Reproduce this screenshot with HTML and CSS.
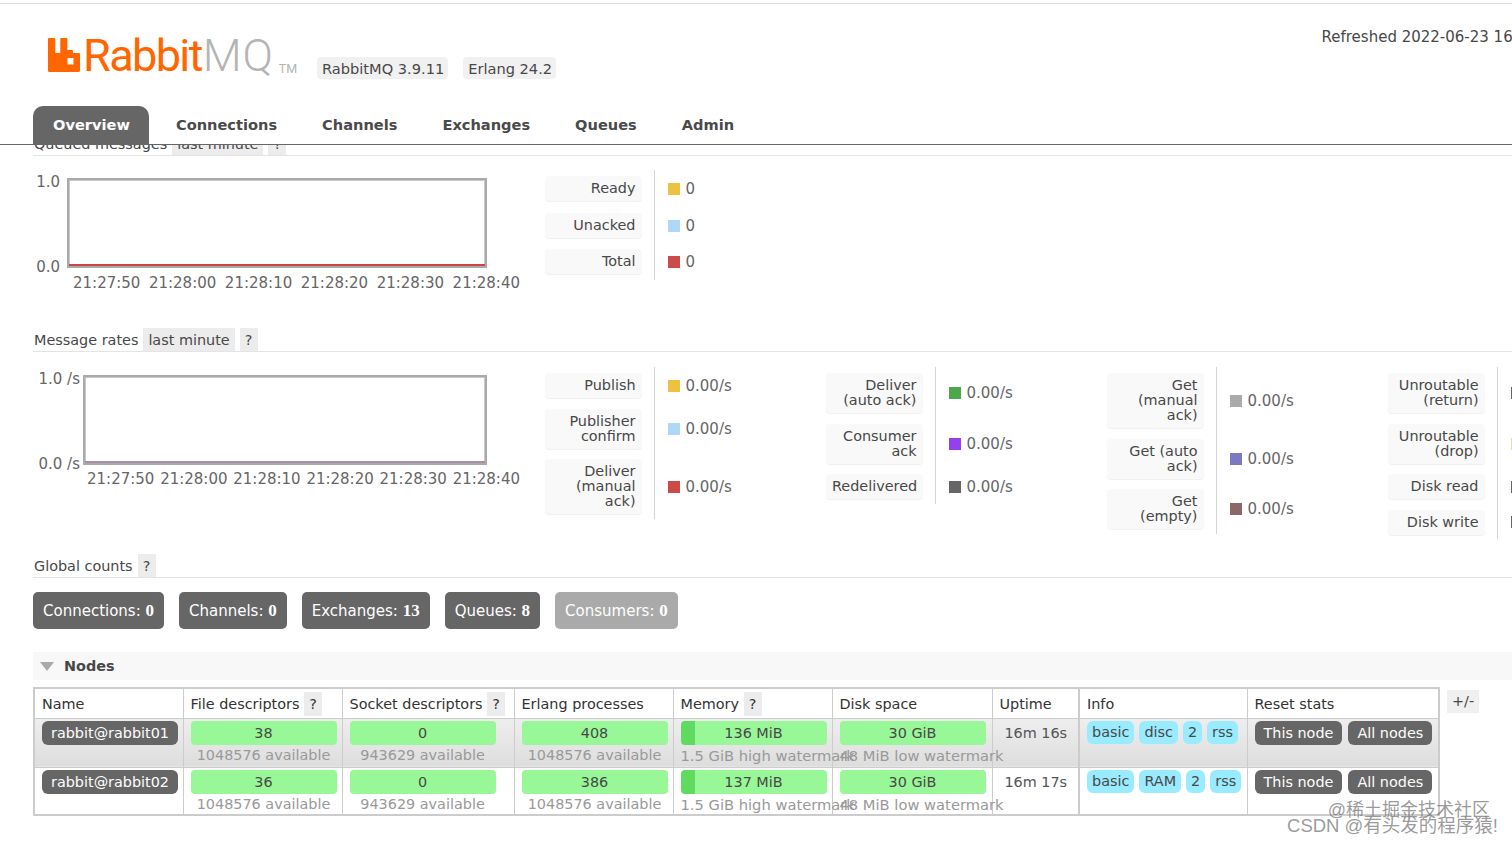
FILE: index.html

```html
<!DOCTYPE html>
<html lang="en">

<head>
    <meta charset="UTF-8">
    <meta name="viewport" content="width=device-width, initial-scale=1.0">
    <title>RabbitMQ Management</title>
    <link rel="stylesheet" href="styles.css">
</head>

<body>

    <div class="header">
        <div class="logo">
            <svg class="logo-icon" viewBox="0 0 32 34" width="32" height="34">
                <path fill="#ff6600" fill-rule="evenodd" d="M0 1.2C0 .5.5 0 1.2 0h4.9c.7 0 1.2.5 1.2 1.2V15h5V1.2c0-.7.5-1.2 1.2-1.2h4.7c.7 0 1.2.5 1.2 1.2V12h4.4c.7 0 1.2.5 1.2 1.2V15h5.800c.7 0 1.2.5 1.2 1.2v16.600c0 .7-.5 1.2-1.2 1.2H1.200C.5 34 0 33.500 0 32.800zM19.500 20v6.500h6V20z"/>
            </svg>
            <span class="logo-rabbit">Rabbit</span><span class="logo-mq">MQ</span><span class="logo-tm">TM</span>
        </div>
        <span class="chip version">RabbitMQ 3.9.11</span>
        <span class="chip version">Erlang 24.2</span>
        <span class="refreshed">Refreshed 2022-06-23 16:28:43</span>
    </div>

    <div class="nav">
        <a class="tab active">Overview</a>
        <a class="tab">Connections</a>
        <a class="tab">Channels</a>
        <a class="tab">Exchanges</a>
        <a class="tab">Queues</a>
        <a class="tab">Admin</a>
    </div>

    <div class="content">

        <div class="heading first">
            <span>Queued messages</span>
            <span class="chip">last minute</span>
            <span class="chip help">?</span>
        </div>

        <div class="stats queued">
            <div class="chart">
                <div class="plot-row">
                    <div class="yaxis short">
                        <span>1.0</span>
                        <span>0.0</span>
                    </div>
                    <div class="plot"><div class="zero red"></div></div>
                </div>
                <div class="ticks short">
                    <span>21:27:50</span><span>21:28:00</span><span>21:28:10</span><span>21:28:20</span><span>21:28:30</span><span>21:28:40</span>
                </div>
            </div>
            <table class="legend">
                <tr><th><div>Ready</div></th><td><i class="swatch yellow"></i>0</td></tr>
                <tr><th><div>Unacked</div></th><td><i class="swatch blue"></i>0</td></tr>
                <tr><th><div>Total</div></th><td><i class="swatch crimson"></i>0</td></tr>
            </table>
        </div>

        <div class="heading">
            <span>Message rates</span>
            <span class="chip">last minute</span>
            <span class="chip help">?</span>
        </div>

        <div class="stats rates">
            <div class="chart">
                <div class="plot-row">
                    <div class="yaxis long">
                        <span>1.0 /s</span>
                        <span>0.0 /s</span>
                    </div>
                    <div class="plot"><div class="zero mauve"></div></div>
                </div>
                <div class="ticks long">
                    <span>21:27:50</span><span>21:28:00</span><span>21:28:10</span><span>21:28:20</span><span>21:28:30</span><span>21:28:40</span>
                </div>
            </div>
            <table class="legend">
                <tr><th><div>Publish</div></th><td><i class="swatch yellow"></i>0.00/s</td></tr>
                <tr><th><div>Publisher<br>confirm</div></th><td><i class="swatch blue"></i>0.00/s</td></tr>
                <tr><th><div>Deliver<br>(manual<br>ack)</div></th><td><i class="swatch crimson"></i>0.00/s</td></tr>
            </table>
            <table class="legend">
                <tr><th><div>Deliver<br>(auto ack)</div></th><td><i class="swatch green"></i>0.00/s</td></tr>
                <tr><th><div>Consumer<br>ack</div></th><td><i class="swatch purple"></i>0.00/s</td></tr>
                <tr><th><div>Redelivered</div></th><td><i class="swatch dark"></i>0.00/s</td></tr>
            </table>
            <table class="legend">
                <tr><th><div>Get<br>(manual<br>ack)</div></th><td><i class="swatch grey"></i>0.00/s</td></tr>
                <tr><th><div>Get (auto<br>ack)</div></th><td><i class="swatch indigo"></i>0.00/s</td></tr>
                <tr><th><div>Get<br>(empty)</div></th><td><i class="swatch plum"></i>0.00/s</td></tr>
            </table>
            <table class="legend">
                <tr><th><div>Unroutable<br>(return)</div></th><td><i class="swatch dark"></i>0.00/s</td></tr>
                <tr><th><div>Unroutable<br>(drop)</div></th><td><i class="swatch olive"></i>0.00/s</td></tr>
                <tr><th><div>Disk read</div></th><td><i class="swatch dark"></i>0.00/s</td></tr>
                <tr><th><div>Disk write</div></th><td><i class="swatch dark"></i>0.00/s</td></tr>
            </table>
        </div>

        <div class="heading global">
            <span>Global counts</span>
            <span class="chip help">?</span>
        </div>

        <div class="counts">
            <div class="count">Connections: <b>0</b></div>
            <div class="count">Channels: <b>0</b></div>
            <div class="count">Exchanges: <b>13</b></div>
            <div class="count">Queues: <b>8</b></div>
            <div class="count faded">Consumers: <b>0</b></div>
        </div>

        <div class="section-bar">
            <svg class="arrow" viewBox="0 0 14 9" width="14" height="9"><path fill="#aaaaaa" d="M0 0h14L7 9z"/></svg>
            <span>Nodes</span>
        </div>

        <div class="nodes">
            <table class="list">
                <colgroup>
                    <col class="c-name"><col class="c-file"><col class="c-sock"><col class="c-proc"><col class="c-mem"><col class="c-disk"><col class="c-up"><col class="c-info"><col class="c-reset">
                </colgroup>
                <tr>
                    <th>Name</th>
                    <th>File descriptors <span class="chip help">?</span></th>
                    <th>Socket descriptors <span class="chip help">?</span></th>
                    <th>Erlang processes</th>
                    <th>Memory <span class="chip help">?</span></th>
                    <th>Disk space</th>
                    <th>Uptime</th>
                    <th class="split">Info</th>
                    <th>Reset stats</th>
                </tr>
                <tr class="alt">
                    <td class="center"><span class="pill name">rabbit@rabbit01</span></td>
                    <td><div class="bar">38</div><div class="sub">1048576 available</div></td>
                    <td><div class="bar">0</div><div class="sub">943629 available</div></td>
                    <td><div class="bar">408</div><div class="sub">1048576 available</div></td>
                    <td><div class="bar mem">136 MiB</div><div class="sub left">1.5 GiB high watermark</div></td>
                    <td><div class="bar">30 GiB</div><div class="sub left">48 MiB low watermark</div></td>
                    <td class="center uptime">16m 16s</td>
                    <td class="split"><div class="tags"><span class="tag">basic</span><span class="tag">disc</span><span class="tag">2</span><span class="tag">rss</span></div></td>
                    <td><div class="resets"><span class="pill">This node</span><span class="pill">All nodes</span></div></td>
                </tr>
                <tr>
                    <td class="center"><span class="pill name">rabbit@rabbit02</span></td>
                    <td><div class="bar">36</div><div class="sub">1048576 available</div></td>
                    <td><div class="bar">0</div><div class="sub">943629 available</div></td>
                    <td><div class="bar">386</div><div class="sub">1048576 available</div></td>
                    <td><div class="bar mem">137 MiB</div><div class="sub left">1.5 GiB high watermark</div></td>
                    <td><div class="bar">30 GiB</div><div class="sub left">48 MiB low watermark</div></td>
                    <td class="center uptime">16m 17s</td>
                    <td class="split"><div class="tags"><span class="tag">basic</span><span class="tag">RAM</span><span class="tag">2</span><span class="tag">rss</span></div></td>
                    <td><div class="resets"><span class="pill">This node</span><span class="pill">All nodes</span></div></td>
                </tr>
            </table>
            <span class="chip toggle">+/-</span>
        </div>

    </div>

    <div class="watermark">
        <div>@稀土掘金技术社区</div>
        <div class="watermark-csdn">CSDN @有头发的程序猿!</div>
    </div>

</body>

</html>
```

FILE: styles.css

```css
html, body {
    height: 100%;
}

body {
    margin: 0;
    width: 1512px;
    overflow: hidden;
    background: #ffffff;
    color: #484848;
    font-family: "DejaVu Sans", Verdana, sans-serif;
    font-size: 14.4px;
    line-height: 15px;
}

.header {
    display: flex;
    align-items: flex-start;
    height: 102px;
    margin-top: 3px;
    border-top: 1px solid #dddddd;
    white-space: nowrap;
}

.logo {
    display: flex;
    align-items: flex-start;
    width: 270px;
    margin: 34px 0 0 47px;
    font-family: Roboto, "Liberation Sans", sans-serif;
    font-size: 45px;
    line-height: 36px;
}

.logo-icon {
    flex-shrink: 0;
    margin: 0 3px 0 1px;
}

.logo-rabbit {
    color: #ff6600;
    letter-spacing: -1.6px;
}

.logo-mq {
    margin-left: 1px;
    font-weight: 300;
    letter-spacing: 0.8px;
    color: #b4b4b4;
}

.logo-tm {
    margin: 24px 0 0 5px;
    color: #b4b4b4;
    font-size: 12.5px;
    line-height: 14px;
}

.chip {
    display: inline-block;
    padding: 4px 5px;
    background: #ececec;
}

.chip.help {
    padding: 4px 0;
    width: 18px;
    text-align: center;
}

.version {
    flex-shrink: 0;
    margin: 53px 15px 0 0;
    padding: 4px 4px 3px 5px;
    border-radius: 4px;
    background: #f1f1f1;
    font-size: 14.6px;
}

.refreshed {
    flex-shrink: 0;
    margin: 26px -49px 0 auto;
    font-size: 15px;
}

.nav {
    display: flex;
    height: 38px;
    padding-left: 33px;
    border-bottom: 1px solid #666666;
    font-size: 14.6px;
    font-weight: bold;
    color: #4a4a4a;
}

.tab {
    padding: 11px 0 0;
    margin-right: 45px;
}

.tab.active {
    padding: 11px 19px 0 20px;
    margin-right: 27px;
    border-radius: 10px 10px 0 0;
    background: #666666;
    color: #ffffff;
}

.content {
    padding-left: 33px;
    overflow: hidden;
    height: 699px;
}

.heading {
    display: flex;
    gap: 5px;
    height: 23px;
    margin-top: 50px;
    border-bottom: 1px solid #e4e4e4;
    align-items: flex-end;
}

.heading > span:first-child {
    padding: 0 0 3px 1px;
}

.heading .chip {
    padding-top: 5px;
    padding-bottom: 3px;
}

.heading.first {
    margin-top: -13px;
}

.heading.global {
    margin-top: 13px;
}

.stats {
    display: flex;
    margin-top: 15px;
}

.stats.queued {
    height: 108px;
    margin-top: 14px;
}

.stats.rates {
    height: 174px;
}

.chart {
    width: 512px;
    flex-shrink: 0;
    padding-top: 8px;
    color: #666666;
    font-size: 15px;
}

.plot-row {
    display: flex;
    height: 90px;
}

.yaxis {
    display: flex;
    flex-direction: column;
    justify-content: space-between;
    align-items: flex-end;
    margin: -3px 0 -7px;
    box-sizing: border-box;
    height: 100px;
}

.yaxis.short {
    width: 34px;
    padding-right: 7px;
}

.yaxis.long {
    width: 50px;
    padding-right: 3px;
}

.plot {
    flex: none;
    display: flex;
    align-items: flex-end;
    box-sizing: border-box;
    width: 404px;
    height: 90px;
    border: 2px solid #aaaaaa;
    box-shadow: inset 0 0 0 1px #c8c8c8;
}

.short + .plot {
    width: 420px;
}

.zero {
    width: 100%;
    height: 2px;
}

.zero.red {
    background: #c94444;
}

.zero.mauve {
    background: #a890a8;
}

.ticks {
    display: flex;
    justify-content: space-between;
    width: 447px;
    white-space: nowrap;
}

.ticks.short {
    margin: 8px 0 0 40px;
}

.ticks.long {
    width: 433px;
    margin: 7px 0 0 54px;
}

.legend {
    flex-shrink: 0;
    align-self: flex-start;
    border-collapse: collapse;
    width: 281px;
    table-layout: fixed;
}

.legend th {
    width: 109px;
    padding: 6px 12px 4.5px 0;
    box-sizing: border-box;
    font-weight: normal;
    text-align: right;
}

.queued .legend th {
    padding: 6px 12px 5.5px 0;
}

.legend th div {
    padding: 5px 6px;
    border-radius: 4px;
    background: #f9f9f9;
    box-shadow: 0 1px 1px #f0f0f0;
}

.legend td {
    padding: 3px 0 0 13px;
    border-left: 1px solid #d4d4d4;
    color: #666666;
    font-size: 15px;
    white-space: nowrap;
}

.swatch {
    display: inline-block;
    width: 12px;
    height: 12px;
    margin-right: 6px;
    vertical-align: -1px;
}

.yellow { background: #edc240; }
.blue { background: #afd8f8; }
.crimson { background: #cb4b4b; }
.green { background: #4da74d; }
.purple { background: #9440ed; }
.dark { background: #666666; }
.grey { background: #aaaaaa; }
.indigo { background: #7c79c3; }
.plum { background: #8d6666; }
.olive { background: #e0e0a0; }

.counts {
    display: flex;
    gap: 15px;
    margin-top: 14px;
}

.count {
    height: 37px;
    padding: 0 10px;
    border-radius: 5px;
    background: #666666;
    color: #ffffff;
    font-size: 15px;
    line-height: 38px;
    white-space: nowrap;
}

.count b {
    font-family: "Liberation Serif", serif;
    font-size: 17px;
}

.count.faded {
    background: #aaaaaa;
}

.section-bar {
    display: flex;
    align-items: center;
    gap: 10px;
    height: 28px;
    margin-top: 23px;
    padding-left: 7px;
    background: #f8f8f8;
    font-weight: bold;
}

.nodes {
    display: flex;
    align-items: flex-start;
    margin-top: 7px;
}

.list {
    flex-shrink: 0;
    width: 1405px;
    table-layout: fixed;
    border-collapse: collapse;
    border: 2px solid #cccccc;
}

.c-name { width: 149px; }
.c-file { width: 159px; }
.c-sock { width: 172px; }
.c-proc { width: 159px; }
.c-mem { width: 159px; }
.c-disk { width: 160px; }
.c-up { width: 87px; }
.c-info { width: 168px; }
.c-reset { width: 192px; }

.list th,
.list td {
    box-sizing: border-box;
    border: 1px solid #cccccc;
    padding: 2px 6px 0 7px;
    vertical-align: top;
    white-space: nowrap;
}

.list th {
    height: 30px;
    padding-top: 3px;
    font-weight: normal;
    line-height: 24px;
    text-align: left;
    color: #333333;
}

.list th .chip.help {
    padding: 0;
    line-height: 24px;
}

.list td {
    height: 48px;
}

.list .alt td {
    height: 49px;
    background: linear-gradient(#eeeeee, #dddddd);
}

.list .split {
    border-left: 2px solid #cccccc;
}

.list .center {
    text-align: center;
}

.list .uptime {
    padding-top: 7px;
    color: #555555;
}

.pill {
    display: inline-block;
    padding: 5px 9px 4px;
    border-radius: 6px;
    background: #666666;
    color: #ffffff;
}

.bar {
    width: 146px;
    height: 24px;
    border-radius: 4px;
    background: #98f898;
    line-height: 24px;
    text-align: center;
}

.bar.mem {
    background: linear-gradient(90deg, #5fdc5f 14px, #98f898 14px);
}

.sub {
    width: 146px;
    margin-top: 3px;
    color: #999999;
    text-align: center;
}

.sub.left {
    font-size: 14.7px;
    text-align: left;
}

.tags,
.resets {
    display: flex;
    gap: 5px;
}

.resets {
    gap: 6px;
}

.tag {
    padding: 4px 5px;
    border-radius: 6px;
    background: #99ebff;
}

.toggle {
    margin: 3px 0 0 7px;
    padding: 4px 5px;
    background: #f0f0f0;
}

.watermark {
    position: absolute;
    right: 14px;
    top: 803px;
    color: rgba(110, 110, 110, 0.7);
    font-family: "Liberation Sans", "Noto Sans CJK SC", sans-serif;
    font-size: 18px;
    line-height: 15px;
    text-align: right;
    white-space: nowrap;
}

.watermark div:first-child {
    margin-right: 8px;
}

.watermark-csdn {
    font-size: 18.5px;
}
```
